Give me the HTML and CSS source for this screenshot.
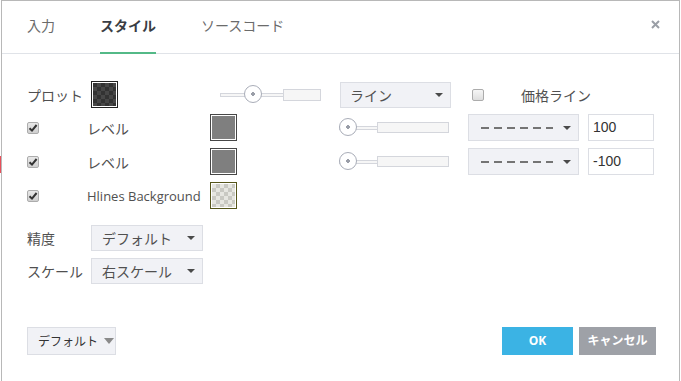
FILE: index.html
```html
<!DOCTYPE html>
<html lang="ja">
<head>
  <meta charset="UTF-8">
  <title>スタイル</title>
  <link rel="stylesheet" href="styles.css">
</head>
<body>
  <div class="edge-mark"></div>
  <div class="dialog">
    <div class="tabs">
      <div class="tab">入力</div>
      <div class="tab active">スタイル</div>
      <div class="tab">ソースコード</div>
      <svg class="close" width="9" height="9" viewBox="0 0 9 9"><path d="M1 1L8 8M8 1L1 8" stroke="#9a9ea6" stroke-width="2"/></svg>
    </div>

    <div class="content">
      <div class="row row-plot">
        <div class="label plot-label">プロット</div>
        <div class="cell-swatch-plot"><div class="swatch dark"><div class="checker-dark"></div></div></div>
        <div class="slider slider-plot">
          <div class="track-thin"></div><div class="track-thick"></div>
          <div class="thumb"></div>
        </div>
        <div class="select select-type"><span>ライン</span><i class="caret"></i></div>
        <span class="check"></span>
        <div class="label price-label">価格ライン</div>
      </div>

      <div class="row">
        <div class="cell-check"><span class="check on"><svg width="10" height="10" viewBox="0 0 10 10"><path d="M1.5 5.2L4 7.6L8.6 2" fill="none" stroke="#333" stroke-width="2"/></svg></span></div>
        <div class="label level-label">レベル</div>
        <div class="swatch grey"><div class="fill-grey"></div></div>
        <div class="slider slider-level">
          <div class="track-thin"></div><div class="track-thick"></div>
          <div class="thumb"></div>
        </div>
        <div class="select select-dash"><span class="dashes"></span><i class="caret"></i></div>
        <div class="input">100</div>
      </div>

      <div class="row">
        <div class="cell-check"><span class="check on"><svg width="10" height="10" viewBox="0 0 10 10"><path d="M1.5 5.2L4 7.6L8.6 2" fill="none" stroke="#333" stroke-width="2"/></svg></span></div>
        <div class="label level-label">レベル</div>
        <div class="swatch grey"><div class="fill-grey"></div></div>
        <div class="slider slider-level">
          <div class="track-thin"></div><div class="track-thick"></div>
          <div class="thumb"></div>
        </div>
        <div class="select select-dash"><span class="dashes"></span><i class="caret"></i></div>
        <div class="input">-100</div>
      </div>

      <div class="row">
        <div class="cell-check"><span class="check on"><svg width="10" height="10" viewBox="0 0 10 10"><path d="M1.5 5.2L4 7.6L8.6 2" fill="none" stroke="#333" stroke-width="2"/></svg></span></div>
        <div class="label level-label latin">Hlines Background</div>
        <div class="swatch olive"><div class="checker-light"></div></div>
      </div>

      <div class="row row-small first-small">
        <div class="label plot-label">精度</div>
        <div class="select select-small"><span>デフォルト</span><i class="caret"></i></div>
      </div>
      <div class="row row-small">
        <div class="label plot-label">スケール</div>
        <div class="select select-small"><span>右スケール</span><i class="caret"></i></div>
      </div>
    </div>

    <div class="footer">
      <div class="btn-default">デフォルト <i class="caret caret-grey"></i></div>
      <div class="btn btn-ok">OK</div>
      <div class="btn btn-cancel">キャンセル</div>
    </div>
  </div>
</body>
</html>
```

FILE: styles.css
```css
body {
  margin: 0;
  font-family: "Open Sans", "Noto Sans CJK JP", sans-serif;
  font-size: 14px;
  color: #505050;
  background: #fff;
}
.edge-mark {
  position: absolute;
  left: 0;
  top: 156px;
  width: 1px;
  height: 17px;
  background: #e8505b;
}
.dialog {
  margin-left: 1px;
  width: 679px;
  height: 381px;
  box-sizing: border-box;
  border: 1px solid #b8b8b8;
  border-bottom: none;
}
.tabs {
  display: flex;
  height: 52px;
  padding-left: 25px;
  padding-right: 19px;
  border-bottom: 1px solid #e0e3e8;
}
.tab {
  box-sizing: border-box;
  height: 53px;
  padding-top: 15px;
  margin-right: 45px;
  color: #6b6b6b;
  line-height: 20px;
}
.tab.active {
  color: #3a3d44;
  font-weight: bold;
  border-bottom: 2px solid #53b987;
}
.close {
  margin-left: auto;
  margin-top: 19px;
}
.content {
  padding: 27px 0 0 25px;
}
.row {
  display: flex;
  align-items: center;
  height: 27px;
  margin-bottom: 7px;
}
.row-plot {
  margin-bottom: 6px;
}
.row-small {
  height: 26px;
}
.first-small {
  margin-top: 16px;
}
.label {
  white-space: nowrap;
}
.latin {
  font-size: 13px;
}
.plot-label {
  width: 64px;
}
.cell-swatch-plot {
  width: 129px;
}
.cell-check {
  width: 60px;
}
.level-label {
  width: 123px;
}
.price-label {
  margin-left: 37px;
}

/* color swatches */
.swatch {
  width: 27px;
  height: 27px;
  box-sizing: border-box;
  padding: 1px;
  background: #fff;
  border: 1px solid #222;
}
.swatch > div {
  width: 100%;
  height: 100%;
}
.swatch.grey {
  border-color: #474747;
  margin-right: 102px;
}
.swatch.olive {
  border-color: #55551a;
}
.fill-grey {
  background: #7f7f7f;
}
.checker-dark {
  background-color: #333;
  background-image: conic-gradient(#474747 25%, transparent 0 50%, #474747 0 75%, transparent 0);
  background-size: 8px 8px;
}
.checker-light {
  background-color: #e6e6e0;
  background-image: conic-gradient(#c9c9c2 25%, transparent 0 50%, #c9c9c2 0 75%, transparent 0);
  background-size: 8px 8px;
}

/* sliders */
.slider {
  position: relative;
  display: flex;
  align-items: center;
  height: 27px;
  margin-right: 19px;
}
.slider-plot {
  width: 101px;
}
.slider-level {
  width: 110px;
}
.track-thin {
  flex: 1;
  height: 4px;
  box-sizing: border-box;
  border: 1px solid #d4d6dc;
  border-right: none;
  background: #f6f6f6;
}
.track-thick {
  height: 12px;
  box-sizing: border-box;
  border: 1px solid #d4d6dc;
  background: #f6f6f6;
}
.slider-plot .track-thick {
  width: 38px;
}
.slider-level .track-thick {
  width: 72px;
  height: 11px;
}
.thumb {
  position: absolute;
  top: 4px;
  width: 18px;
  height: 18px;
  box-sizing: border-box;
  border: 1px solid #a9adb8;
  border-radius: 50%;
  background: #fff radial-gradient(circle, #9a9ea8 1.6px, transparent 2px);
}
.slider-plot .thumb {
  left: 24px;
}
.slider-level .thumb {
  left: 0;
}

/* selects */
.select {
  display: flex;
  align-items: center;
  justify-content: space-between;
  box-sizing: border-box;
  height: 26px;
  padding: 0 7px 0 9px;
  background: #f1f2f6;
  border: 1px solid #dcdee4;
}
.select-type {
  width: 111px;
  margin-right: 21px;
}
.select-dash {
  width: 111px;
  height: 27px;
  margin-right: 9px;
  padding-left: 12px;
}
.select-small {
  width: 112px;
  padding-left: 10px;
}
.caret {
  width: 0;
  height: 0;
  border-left: 4px solid transparent;
  border-right: 4px solid transparent;
  border-top: 4px solid #4a4a4a;
}
.caret-grey {
  border-left-width: 5px;
  border-right-width: 5px;
  border-top: 6px solid #8a8a8a;
  margin-left: 6px;
}
.dashes {
  width: 72px;
  height: 2px;
  background: repeating-linear-gradient(to right, #747474 0 8px, transparent 8px 13px);
}
.input {
  width: 66px;
  height: 27px;
  box-sizing: border-box;
  border: 1px solid #dcdee4;
  padding-left: 4px;
  line-height: 25px;
  font-family: "Liberation Sans", sans-serif;
  color: #333;
}

/* checkboxes */
.check {
  display: inline-flex;
  align-items: center;
  justify-content: center;
  width: 12px;
  height: 12px;
  box-sizing: border-box;
  border: 1px solid #acacac;
  border-radius: 2px;
  background: linear-gradient(#f6f6f6, #dedede);
}
.check.on {
  background: linear-gradient(#e8e8e8, #cfcfcf);
}

/* footer */
.footer {
  display: flex;
  align-items: center;
  margin-top: 43px;
  padding: 0 23px 0 25px;
}
.btn-default {
  display: flex;
  align-items: center;
  box-sizing: border-box;
  width: 89px;
  height: 28px;
  padding-left: 10px;
  font-size: 12px;
  color: #333;
  background: #f1f2f6;
  border: 1px solid #dcdee4;
}
.btn {
  height: 28px;
  line-height: 28px;
  text-align: center;
  font-size: 12px;
  font-weight: bold;
  color: #fff;
}
.btn-ok {
  width: 71px;
  margin-left: auto;
  margin-right: 6px;
  background: #3bb3e4;
}
.btn-cancel {
  width: 77px;
  background: #9ea1a7;
}
```
